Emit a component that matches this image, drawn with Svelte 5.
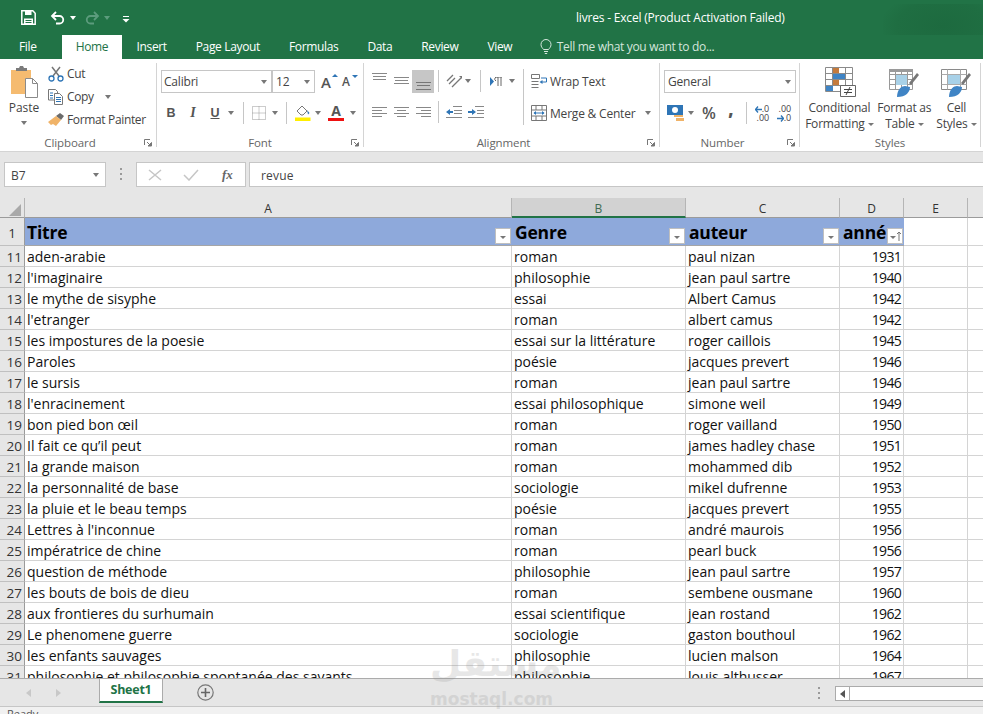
<script>
  const tabs = ['Insert', 'Page Layout', 'Formulas', 'Data', 'Review', 'View'];
  const rows = [
    [11, 'aden-arabie', 'roman', 'paul nizan', 1931],
    [12, "l'imaginaire", 'philosophie', 'jean paul sartre', 1940],
    [13, 'le mythe de sisyphe', 'essai', 'Albert Camus', 1942],
    [14, "l'etranger", 'roman', 'albert camus', 1942],
    [15, 'les impostures de la poesie', 'essai sur la littérature', 'roger caillois', 1945],
    [16, 'Paroles', 'poésie', 'jacques prevert', 1946],
    [17, 'le sursis', 'roman', 'jean paul sartre', 1946],
    [18, "l'enracinement", 'essai philosophique', 'simone weil', 1949],
    [19, 'bon pied bon œil', 'roman', 'roger vailland', 1950],
    [20, 'Il fait ce qu’il peut', 'roman', 'james hadley chase', 1951],
    [21, 'la grande maison', 'roman', 'mohammed dib', 1952],
    [22, 'la personnalité de base', 'sociologie', 'mikel dufrenne', 1953],
    [23, 'la pluie et le beau temps', 'poésie', 'jacques prevert', 1955],
    [24, "Lettres à l'inconnue", 'roman', 'andré maurois', 1956],
    [25, 'impératrice de chine', 'roman', 'pearl buck', 1956],
    [26, 'question de méthode', 'philosophie', 'jean paul sartre', 1957],
    [27, 'les bouts de bois de dieu', 'roman', 'sembene ousmane', 1960],
    [28, 'aux frontieres du surhumain', 'essai scientifique', 'jean rostand', 1962],
    [29, 'Le phenomene guerre', 'sociologie', 'gaston bouthoul', 1962],
    [30, 'les enfants sauvages', 'philosophie', 'lucien malson', 1964],
    [31, 'philosophie et philosophie spontanée des savants', 'philosophie', 'louis althusser', 1967]
  ];
  const heads = ['A', 'B', 'C', 'D', 'E', ''];
</script>

<div class="window">
  <header class="titlebar">
    <div class="qat">
      <svg class="save" width="15" height="15" viewBox="0 0 15 15"><path d="M.8.8h11l2.4 2.4v11H.8z" fill="none" stroke="#fff" stroke-width="1.5"/><path d="M4 1h6.500v4H4zM3 8.500h9V14H3z" fill="#fff"/><path d="M4.500 10h6v1h-6zM4.500 12h6v1h-6z" fill="#217346"/></svg>
      <svg class="undo" width="15" height="14" viewBox="0 0 15 14"><path d="M2 5h7.500a3.700 3.700 0 0 1 0 7.500H6M6 1 2 5l4 4" fill="none" stroke="#fff" stroke-width="1.800"/></svg>
      <i class="caret white"></i>
      <svg class="redo" width="15" height="14" viewBox="0 0 15 14"><path d="M13 5H5.500a3.700 3.700 0 0 0 0 7.500H9M9 1l4 4-4 4" fill="none" stroke="#5c9c7d" stroke-width="1.800"/></svg>
      <i class="caret dim"></i>
      <svg class="custom" width="8" height="7" viewBox="0 0 8 7"><path d="M1 .5h6" stroke="#fff"/><path d="M.5 3h7L4 6.500z" fill="#fff"/></svg>
    </div>
    <div class="doc-title">livres - Excel (Product Activation Failed)</div>
    <div class="blot"></div>
  </header>

  <nav class="tabs">
    <span class="tab file">File</span>
    <span class="tab active">Home</span>
    {#each tabs as t}<span class="tab">{t}</span>{/each}
    <svg class="bulb" width="12" height="16" viewBox="0 0 12 16"><path d="M3.500 10.500C2.500 9 1 8 1 5.500a5 5 0 0 1 10 0C11 8 9.500 9 8.500 10.500zM4 12.500h4M4.800 14.500h2.400" fill="none" stroke="#d5e6dd"/></svg>
    <span class="tell">Tell me what you want to do...</span>
  </nav>

  <section class="ribbon">
    <div class="group clipboard">
      <div class="body clip-body">
        <div class="paste">
          <svg width="29" height="32" viewBox="0 0 29 32"><path d="M1 4h20v24H1z" fill="#f5bb70"/><path d="M6 2h3l1-2h3l1 2h3v3H6z" fill="#7b7b7b"/><path d="M15.500 12.500h7l5 5v14h-12z" fill="#fff" stroke="#8a8a8a"/><path d="M22.500 12.500v5h5" fill="none" stroke="#8a8a8a"/></svg>
          <span>Paste</span>
          <i class="caret"></i>
        </div>
        <div class="clip-list">
          <div class="clip-item">
            <svg width="16" height="16" viewBox="0 0 16 16"><path d="M4 1l7 9M12 1 5 10" stroke="#777" stroke-width="1.500"/><circle cx="3.500" cy="12.500" r="2.500" fill="none" stroke="#2e75b6" stroke-width="1.300"/><circle cx="12.500" cy="12.500" r="2.500" fill="none" stroke="#2e75b6" stroke-width="1.300"/></svg>
            <span>Cut</span>
          </div>
          <div class="clip-item">
            <svg width="16" height="16" viewBox="0 0 16 16"><path d="M.5.500h7l2 2V11H.5z" fill="#fff" stroke="#777"/><path d="M6.500 4.500h5l3 3v8h-8z" fill="#fff" stroke="#777"/><path d="M2 4h3M2 6.500h3M2 9h3M8 8.500h5M8 10.500h5M8 12.500h5" stroke="#2e75b6"/></svg>
            <span>Copy</span>
            <i class="caret copy-caret"></i>
          </div>
          <div class="clip-item">
            <svg width="16" height="14" viewBox="0 0 16 14"><path d="M8 3l4-3 4 3-3 4z" fill="#6b6b6b"/><path d="M0 9l8-6 5 4-5 6-3-2-2 1z" fill="#f0b368"/></svg>
            <span>Format Painter</span>
          </div>
        </div>
      </div>
      <div class="label">Clipboard<svg class="launch" width="8" height="8" viewBox="0 0 8 8"><path d="M.5 6V.5H6" fill="none" stroke="#777"/><path d="M3 3l3.500 3.500M4 7h3.500V3.500z" stroke="#777" fill="#777"/></svg></div>
    </div>

    <div class="group font">
      <div class="body col">
        <div class="font-row1">
          <div class="field fname"><span>Calibri</span><i class="caret"></i></div>
          <div class="field fsize"><span>12</span><i class="caret"></i></div>
          <span class="grow-a big">A<i class="up"></i></span>
          <span class="grow-a small">A<i class="down"></i></span>
        </div>
        <div class="font-row2">
          <b class="bi">B</b>
          <em class="bi">I</em>
          <u class="bi">U</u>
          <i class="caret"></i>
          <s class="sep"></s>
          <svg width="14" height="14" viewBox="0 0 14 14"><path d="M.5.500h13v13H.5zM7 .5v13M.5 7h13" fill="none" stroke="#999" stroke-dasharray="1 1"/></svg>
          <i class="caret"></i>
          <s class="sep"></s>
          <svg width="17" height="17" viewBox="0 0 17 17"><path d="M3 7l5-5 5 5-4 4H7z" fill="#fff" stroke="#777"/><path d="M13 6l2.500 3-1.500 1.500z" fill="#2e75b6"/><path d="M1 13.500h15.500V17H1z" fill="#ffee00"/></svg>
          <i class="caret"></i>
          <span class="fcolor">A</span>
          <i class="caret"></i>
        </div>
      </div>
      <div class="label">Font<svg class="launch" width="8" height="8" viewBox="0 0 8 8"><path d="M.5 6V.5H6" fill="none" stroke="#777"/><path d="M3 3l3.500 3.500M4 7h3.500V3.500z" stroke="#777" fill="#777"/></svg></div>
    </div>

    <div class="group alignment">
      <div class="body align-body">
        <div class="align-tools">
          <div class="align-row1">
            <svg class="lift" width="15" height="10" viewBox="0 0 15 10"><path d="M0 .5h15M1 3.500h13M1 6.500h13" stroke="#888"/></svg>
            <svg width="15" height="10" viewBox="0 0 15 10"><path d="M0 1.500h15M1 4.500h13M0 7.500h15" stroke="#888"/></svg>
            <span class="selected"><svg width="15" height="10" viewBox="0 0 15 10"><path d="M0 2.500h15M1 5.500h13M0 9.500h15" stroke="#777"/></svg></span>
            <s class="sep"></s>
            <svg width="17" height="16" viewBox="0 0 17 16"><path d="M1 8l6-6M3 11l6-6M6 14 15 5" stroke="#777" stroke-width="1.300"/><path d="M13 3h3v3z" fill="#777"/></svg>
            <i class="caret"></i>
            <s class="sep"></s>
            <svg width="13" height="9" viewBox="0 0 13 9"><path d="M0 0l4 4.500L0 9z" fill="#2e75b6"/><path d="M8 0v9M11 0v9M6 0h6M6 4a2 2 0 0 1 2-4" stroke="#666" fill="none"/></svg>
            <i class="caret"></i>
          </div>
          <div class="align-row2">
            <svg width="15" height="10" viewBox="0 0 15 10"><path d="M0 .5h15M0 3.500h10M0 6.500h15M0 9.500h10" stroke="#888"/></svg>
            <svg width="15" height="10" viewBox="0 0 15 10"><path d="M0 .5h15M3 3.500h9M0 6.500h15M3 9.500h9" stroke="#888"/></svg>
            <svg width="15" height="10" viewBox="0 0 15 10"><path d="M0 .5h15M5 3.500h10M0 6.500h15M5 9.500h10" stroke="#888"/></svg>
            <s class="sep"></s>
            <svg width="16" height="12" viewBox="0 0 16 12"><path d="M7 .5h9M8 4.500h8M8 7.500h8M0 11.500h16" stroke="#888"/><path d="M0 6l4-3v2h3v2H4v2z" fill="#2e75b6"/></svg>
            <svg width="16" height="12" viewBox="0 0 16 12"><path d="M7 .5h9M9 4.500h7M9 7.500h7M0 11.500h16" stroke="#888"/><path d="M8 6 4 3v2H0v2h4v2z" fill="#2e75b6"/></svg>
          </div>
        </div>
        <s class="sep tall"></s>
        <div class="wrap-col">
          <div class="wrap-item">
            <svg width="16" height="16" viewBox="0 0 16 16"><path d="M.5 1.500h8v4h-8zM.5 8.500h7M.5 11.500h7M.5 14.500h7" fill="none" stroke="#777"/><path d="M10 5h5.500v4H10" fill="none" stroke="#2e75b6"/><path d="M8.500 9l3-2v4z" fill="#2e75b6"/></svg>
            <span>Wrap Text</span>
          </div>
          <div class="wrap-item">
            <svg width="16" height="16" viewBox="0 0 16 16"><path d="M.5.500h15v15H.5zM.5 5h15M.5 11h15M5 .5V5M11 .5V5M5 11v4.500M11 11v4.500" fill="none" stroke="#777"/><path d="M3 8h10" stroke="#2e75b6"/><path d="M5 6 2.500 8 5 10zM11 6l2.500 2L11 10z" fill="#2e75b6"/></svg>
            <span>Merge &amp; Center</span>
            <i class="caret merge-caret"></i>
          </div>
        </div>
      </div>
      <div class="label">Alignment<svg class="launch" width="8" height="8" viewBox="0 0 8 8"><path d="M.5 6V.5H6" fill="none" stroke="#777"/><path d="M3 3l3.500 3.500M4 7h3.500V3.500z" stroke="#777" fill="#777"/></svg></div>
    </div>

    <div class="group number">
      <div class="body col">
        <div class="field general"><span>General</span><i class="caret"></i></div>
        <div class="num-row">
          <svg width="17" height="16" viewBox="0 0 17 16"><path d="M0 0h16v10H0z" fill="#2e75b6"/><circle cx="8" cy="5" r="3" fill="#fff"/><path d="M7 10h9v2H7zM9 13h8v3H9z" fill="#f0b368"/></svg>
          <i class="caret"></i>
          <span class="pct">%</span>
          <span class="comma">,</span>
          <s class="sep"></s>
          <span class="dec"><svg width="7" height="7" viewBox="0 0 7 7"><path d="M3 .5.500 3.500 3 6.500M1 3.500h6" fill="none" stroke="#2e75b6" stroke-width="1.300"/></svg>.0<br/>.00</span>
          <span class="dec">.00<br/><svg width="7" height="7" viewBox="0 0 7 7"><path d="M4 .5l2.500 3L4 6.500M6 3.500H0" fill="none" stroke="#2e75b6" stroke-width="1.300"/></svg>.0</span>
        </div>
      </div>
      <div class="label">Number<svg class="launch" width="8" height="8" viewBox="0 0 8 8"><path d="M.5 6V.5H6" fill="none" stroke="#777"/><path d="M3 3l3.500 3.500M4 7h3.500V3.500z" stroke="#777" fill="#777"/></svg></div>
    </div>

    <div class="group styles">
      <div class="body styles-body">
        <div class="style-btn cond">
          <svg width="31" height="30" viewBox="0 0 31 30"><path d="M.5.500h27v24H.5zM7.500.5v24M20.500.5v24M.5 6.500h27M.5 12.500h27M.5 18.500h27" fill="#fff" stroke="#8a8a8a"/><path d="M8 1h6v5H8zM8 13h6v5H8z" fill="#c47a3c"/><path d="M8 7h12v5H8zM1 19h7v5H1z" fill="#3f84c5"/><path d="M15.500 18.500h15v11h-15z" fill="#fff" stroke="#666"/><path d="M19 22.500h8M19 25.500h8M25 20l-4 8" stroke="#444"/></svg>
          <span>Conditional</span>
          <span>Formatting<i class="caret"></i></span>
        </div>
        <div class="style-btn fmt">
          <svg width="30" height="30" viewBox="0 0 30 30"><path d="M.5 2.500h23v20H.5zM6.500 2.500v20M12.500 2.500v20M18.500 2.500v20M.5 7.500h23M.5 12.500h23M.5 17.500h23" fill="#fff" stroke="#999"/><path d="M7 8h11v10H7z" fill="#a8d1e8"/><path d="M0 2h24v3H0z" fill="#9a9a9a"/><path d="M20 16 28 6l2 2-8 10z" fill="#777"/><path d="M8 30c0-8 5-11 8-11l5 1c0 5-4 10-13 10z" fill="#3f84c5"/></svg>
          <span>Format as</span>
          <span>Table<i class="caret"></i></span>
        </div>
        <div class="style-btn cellst">
          <svg width="30" height="30" viewBox="0 0 30 30"><path d="M.5 2.500h25v20H.5z" fill="#fff" stroke="#8a8a8a"/><path d="M6.500 7.500h13v10h-13z" fill="#a8d1e8" stroke="#8a8a8a"/><path d="M6.500 2.500v20M19.500 2.500v20M.5 7.500h25M.5 17.500h25" stroke="#aaa"/><path d="M20 16 28 6l2 2-8 10z" fill="#777"/><path d="M8 30c0-8 5-11 8-11l5 1c0 5-4 10-13 10z" fill="#3f84c5"/></svg>
          <span>Cell</span>
          <span>Styles<i class="caret"></i></span>
        </div>
      </div>
      <div class="label">Styles</div>
    </div>
  </section>

  <section class="formula">
    <div class="box namebox"><span>B7</span><i class="caret"></i></div>
    <div class="grip"></div>
    <div class="box fxbox">
      <svg width="14" height="12" viewBox="0 0 14 12"><path d="M1 1l12 10M13 1 1 11" stroke="#c6c6c6" stroke-width="1.500"/></svg>
      <svg width="16" height="12" viewBox="0 0 16 12"><path d="M1 6l5 5L15 1" fill="none" stroke="#c6c6c6" stroke-width="1.500"/></svg>
      <span class="fx">fx</span>
    </div>
    <div class="box input">revue</div>
  </section>

  <section class="sheet">
    <div class="colheads">
      <div class="corner"><svg width="12" height="12" viewBox="0 0 12 12"><path d="M12 0v12H0z" fill="#a9a9a9"/></svg></div>
      {#each heads as h, i}
        <div class="colhead c{i}" class:sel={h === 'B'}>{h}</div>
      {/each}
    </div>
    <div class="row head">
      <div class="rowhead">1</div>
      <div class="cell c0 hc"><span>Titre</span><button class="filter" aria-label="filter"><i class="caret"></i></button></div>
      <div class="cell c1 hc"><span>Genre</span><button class="filter" aria-label="filter"><i class="caret"></i></button></div>
      <div class="cell c2 hc"><span>auteur</span><button class="filter" aria-label="filter"><i class="caret"></i></button></div>
      <div class="cell c3 hc"><span>anné</span><button class="filter" aria-label="sort"><i class="caret"></i><svg width="4" height="9" viewBox="0 0 4 9"><path d="M2 0v9M0 2l2-2 2 2" fill="none" stroke="#777"/></svg></button></div>
      <div class="cell c4"></div>
      <div class="cell c5"></div>
    </div>
    {#each rows as r}
      <div class="row">
        <div class="rowhead">{r[0]}</div>
        <div class="cell c0">{r[1]}</div>
        <div class="cell c1">{r[2]}</div>
        <div class="cell c2">{r[3]}</div>
        <div class="cell c3 num">{r[4]}</div>
        <div class="cell c4"></div>
        <div class="cell c5"></div>
      </div>
    {/each}
  </section>

  <footer class="sheetbar">
    <svg class="nav-a" width="6" height="8" viewBox="0 0 6 8"><path d="M5 0v8L0 4z" fill="#c8c8c8"/></svg>
    <svg class="nav-b" width="6" height="8" viewBox="0 0 6 8"><path d="M1 0v8l5-4z" fill="#c8c8c8"/></svg>
    <div class="sheettab">Sheet1</div>
    <svg class="plus" width="17" height="17" viewBox="0 0 17 17"><circle cx="8.500" cy="8.500" r="7.700" fill="none" stroke="#777" stroke-width="1.200"/><path d="M8.500 4v9M4 8.500h9" stroke="#666" stroke-width="1.600"/></svg>
    <div class="grip"></div>
    <div class="hscroll"><span class="hleft"><svg width="5" height="8" viewBox="0 0 5 8"><path d="M5 0v8L0 4z" fill="#555"/></svg></span></div>
  </footer>
  <div class="status">Ready</div>

  <div class="watermark" aria-hidden="true">
    <div class="wm-ar">مستقل</div>
    <div class="wm-en">mostaql.com</div>
  </div>
</div>

<style>
  :global(body) { margin: 0; background: #e6e6e6; }
  .window { position: relative; width: 983px; height: 714px; overflow: hidden; font-family: "Open Sans", "Noto Sans", sans-serif; font-size: 12px; color: #444; display: flex; flex-direction: column; }
  i { display: block; font-style: normal; }
  s { text-decoration: none; display: block; }

  .caret { width: 0; height: 0; border-left: 3.500px solid transparent; border-right: 3.500px solid transparent; border-top: 4px solid #777; flex: none; }
  .caret.white { border-top-color: #fff; margin-left: 5px; margin-top: 1px; }
  .caret.dim { border-top-color: #5c9c7d; margin-left: 4px; margin-top: 1px; }
  .sep { width: 1px; height: 22px; background: #c6c6c6; flex: none; }

  .titlebar { height: 35px; background: #217346; display: flex; align-items: center; position: relative; flex: none; }
  .qat { display: flex; align-items: center; padding-left: 21px; width: 555px; box-sizing: border-box; }
  .save { margin-right: 14px; }
  .redo { margin-left: 9px; }
  .custom { margin-left: 12px; margin-top: 3px; }
  .doc-title { color: #fff; font-size: 12px; white-space: nowrap; padding-left: 21px; letter-spacing: -.19px; }
  .blot { position: absolute; right: 0; top: 4px; width: 100px; height: 55px; background: radial-gradient(ellipse at 60% 40%, #1d6a3f 0, #1f6e42 55%, #217346 75%); }

  .tabs { height: 24px; background: #217346; display: flex; align-items: stretch; color: #fff; position: relative; flex: none; }
  .tab { padding: 0 14.500px; line-height: 24px; white-space: nowrap; letter-spacing: -.35px; }
  .tab.file { width: 62px; padding: 0 0 0 19px; box-sizing: border-box; }
  .tab.active { background: #fff; color: #217346; width: 60px; padding: 0; text-align: center; margin-right: 0; }
  .bulb { align-self: center; margin-left: 13px; }
  .tell { color: #d5e6dd; line-height: 24px; margin-left: 5px; letter-spacing: -.32px; white-space: nowrap; }

  .ribbon { height: 92px; background: #fff; border-bottom: 1px solid #d4d4d4; display: flex; flex: none; box-sizing: content-box; }
  .group { display: flex; flex-direction: column; margin-top: 4px; height: 84px; border-right: 1px solid #d4d4d4; position: relative; }
  .body { flex: 1; min-height: 0; }
  .col { display: flex; flex-direction: column; }
  .label { height: 14px; text-align: center; font-size: 11.500px; line-height: 14px; color: #666; letter-spacing: -.1px; margin-bottom: -3px; position: relative; flex: none; box-sizing: border-box; }
  .launch { position: absolute; right: 4px; top: 3px; }
  .clipboard { width: 156px; }
  .clipboard .label { padding-right: 16px; }
  .font { width: 206px; }
  .alignment { width: 295px; }
  .alignment .label { padding-right: 16px; }
  .number { width: 139px; }
  .number .label { padding-right: 14px; }
  .styles { width: 180px; }

  .clip-body { display: flex; }
  .paste { width: 48px; display: flex; flex-direction: column; align-items: center; padding-top: 3px; box-sizing: border-box; color: #444; }
  .paste span { line-height: 16px; margin-top: 2px; }
  .paste .caret { margin-top: 5px; }
  .clip-list { margin-top: -1px; }
  .clip-item { display: flex; align-items: center; height: 23px; gap: 3px; white-space: nowrap; letter-spacing: -.35px; }
  .clip-item svg { width: 16px; flex: none; }
  .copy-caret { margin-left: 8px; }

  .font-row1 { display: flex; align-items: center; padding: 7px 0 0 4px; }
  .field { display: flex; align-items: center; justify-content: space-between; height: 23px; box-sizing: border-box; border: 1px solid #c6c6c6; background: #fff; padding: 0 4px 0 2px; white-space: nowrap; letter-spacing: -.2px; }
  .fname { width: 111px; }
  .fsize { width: 43px; padding-left: 3px; margin-right: 6px; }
  .grow-a { color: #555; font-weight: 600; position: relative; width: 20px; }
  .big { font-size: 15px; }
  .small { font-size: 12px; padding-left: 1px; }
  .up, .down { position: absolute; width: 0; height: 0; border-left: 3px solid transparent; border-right: 3px solid transparent; top: 2px; left: 11px; }
  .up { border-bottom: 3px solid #2e75b6; }
  .down { border-top: 3px solid #2e75b6; }

  .font-row2 { display: grid; grid-template-columns: 22px 22px 22px 10px 14px 18px 14px 8px 24px 8px 28px 6px; justify-items: center; align-items: center; padding: 8px 0 0 3px; height: 23px; }
  .bi { font-size: 12.500px; color: #555; }
  .font-row2 em { font-family: "Liberation Serif", serif; font-weight: bold; font-size: 14px; }
  .font-row2 b { font-family: "Liberation Sans", sans-serif; font-size: 12.500px; }
  .font-row2 u { font-family: "Liberation Sans", sans-serif; font-weight: bold; }
  .fcolor { font-weight: 700; font-size: 14px; color: #555; border-bottom: 3px solid #ee1111; line-height: 14px; padding: 0 3px; }

  .align-body { display: flex; }
  .align-tools { width: 159px; padding: 6px 0 0 4px; box-sizing: border-box; }
  .align-row1 { display: grid; grid-template-columns: 22px 22px 22px 8px 24px 4px 20px 12px 20px; justify-items: center; align-items: center; justify-content: start; height: 24px; }
  .lift { margin-bottom: 6px; }
  .selected { width: 22px; height: 23px; background: #c6c6c6; display: flex; align-items: flex-end; justify-content: center; padding-bottom: 3px; box-sizing: border-box; }
  .align-row2 { display: grid; grid-template-columns: 22px 22px 22px 8px 24px 20px; justify-items: center; align-items: center; justify-content: start; height: 22px; margin-top: 8px; }
  .sep.tall { height: 56px; margin-top: 6px; }
  .wrap-col { padding: 6px 0 0 7px; }
  .wrap-item { display: flex; align-items: center; height: 24px; gap: 3px; white-space: nowrap; margin-bottom: 8px; letter-spacing: -.2px; }
  .merge-caret { margin-left: 7px; }

  .general { width: 132px; margin: 7px 0 0 4px; padding: 0 4px 0 3px; }
  .num-row { display: grid; grid-template-columns: 22px 10px 26px 18px 12px 20px 24px; justify-items: center; align-items: center; padding: 9px 0 0 4px; height: 22px; }
  .pct { font-size: 16px; font-weight: 600; color: #555; }
  .comma { font-size: 17px; font-weight: 800; color: #555; line-height: 10px; margin-bottom: 6px; }
  .dec { font-size: 9px; line-height: 9px; color: #444; text-align: right; white-space: nowrap; }
  .dec svg { vertical-align: -1px; }

  .styles-body { display: flex; padding: 4px 0 0 5px; }
  .style-btn { display: flex; flex-direction: column; align-items: center; text-align: center; letter-spacing: -.2px; white-space: nowrap; }
  .style-btn span { line-height: 16px; display: flex; align-items: center; gap: 3px; }
  .style-btn span:nth-of-type(1) { margin-top: 3px; }
  .style-btn .caret { border-left-width: 3px; border-right-width: 3px; border-top-width: 3px; }
  .cond { width: 70px; }
  .cond svg { margin-left: 2px; }
  .fmt { width: 58px; margin-left: 2px; }
  .cellst { width: 48px; }

  .formula { height: 46px; background: #e6e6e6; display: flex; align-items: flex-start; padding: 10px 0 0 4px; box-sizing: border-box; flex: none; }
  .box { height: 25px; box-sizing: border-box; border: 1px solid #c6c6c6; background: #fff; display: flex; align-items: center; padding-top: 1px; }
  .namebox { width: 102px; justify-content: space-between; padding: 1px 6px 0 6px; }
  .grip { width: 2px; height: 12px; margin: 6px 14px 0 14px; background: repeating-linear-gradient(#9a9a9a 0 2px, transparent 2px 5px); flex: none; }
  .fxbox { width: 110px; margin-right: 3px; padding-left: 11px; gap: 21px; }
  .fx { font-family: "Liberation Serif", serif; font-style: italic; font-weight: bold; font-size: 13px; color: #666; margin-left: 2px; }
  .input { flex: 1; padding-left: 11px; border-right: 0; letter-spacing: .2px; }

  .sheet { flex: 1; min-height: 0; overflow: hidden; background: #fff; }
  .colheads { height: 20px; display: flex; background: #e6e6e6; font-size: 12px; color: #333; }
  .corner { width: 25px; box-sizing: border-box; border-right: 1px solid #b5b5b5; border-bottom: 1px solid #9b9b9b; padding: 5px 0 0 9px; flex: none; }
  .colhead { height: 20px; box-sizing: border-box; text-align: center; line-height: 21px; border-right: 1px solid #b5b5b5; border-bottom: 1px solid #9b9b9b; flex: none; }
  .colhead.sel { background: #d2d2d2; border-bottom: 2px solid #217346; color: #3f6b53; }
  .c0 { width: 487px; }
  .c1 { width: 174px; }
  .c2 { width: 154px; }
  .c3 { width: 64px; }
  .c4 { width: 64px; }
  .c5 { width: 16px; }

  .row { display: flex; height: 21px; }
  .row.head { height: 28px; }
  .rowhead { width: 25px; flex: none; box-sizing: border-box; background: #e6e6e6; border-right: 1px solid #9b9b9b; border-bottom: 1px solid #c0c0c0; text-align: right; padding-right: 2px; font-size: 13.500px; line-height: 22px; color: #333; }
  .head .rowhead { line-height: 30px; text-align: center; padding: 0; }
  .cell { flex: none; box-sizing: border-box; border-right: 1px solid #d4d4d4; border-bottom: 1px solid #d4d4d4; padding-left: 2px; font-size: 14px; line-height: 22px; color: #111; white-space: nowrap; overflow: hidden; }
  .num { text-align: right; padding-right: 2px; letter-spacing: -.7px; }
  .hc { background: #8ea9db; font-weight: 700; font-size: 17.500px; color: #000; line-height: 28px; position: relative; border-right: 0; border-bottom: 1px solid #a6a6a6; letter-spacing: -.2px; padding-left: 3px; }
  .hc.c0 { padding-left: 2px; }
  .filter { position: absolute; right: 1px; top: 10px; width: 16px; height: 16px; padding: 0; background: #fff; border: 1px solid #bfbfbf; display: flex; align-items: center; justify-content: center; gap: 1px; }
  .filter .caret { margin-top: 2px; border-left-width: 3px; border-right-width: 3px; border-top-width: 3px; }

  .sheetbar { height: 28px; flex: none; background: #e6e6e6; border-top: 1px solid #ababab; box-sizing: border-box; display: flex; align-items: flex-start; }
  .nav-a { margin: 10px 0 0 26px; }
  .nav-b { margin: 10px 0 0 23px; }
  .sheettab { margin-left: 38px; width: 64px; height: 24px; box-sizing: border-box; background: #fff; border: 1px solid #ababab; border-top: 0; border-bottom: 2px solid #217346; color: #217346; font-weight: 700; font-size: 12.500px; text-align: center; line-height: 22px; letter-spacing: -.25px; }
  .plus { margin: 5px 0 0 34px; }
  .sheetbar .grip { margin: 8px 15px 0 604px; }
  .hscroll { flex: 1; height: 15px; margin-top: 7px; box-sizing: border-box; border: 1px solid #ababab; border-right: 0; background: #fff; display: flex; }
  .hleft { width: 13px; border-right: 1px solid #ababab; display: flex; align-items: center; justify-content: center; }
  .status { height: 8px; flex: none; background: #f1f1f1; border-top: 1px solid #c6c6c6; box-sizing: border-box; padding-left: 7px; font-size: 11px; line-height: 14px; overflow: hidden; color: #555; }

  .watermark { position: absolute; left: 430px; top: 642px; width: 120px; color: #8a8a8a; opacity: .2; text-align: center; pointer-events: none; font-family: "DejaVu Sans", sans-serif; }
  .wm-ar { font-size: 36px; line-height: 44px; font-weight: 700; }
  .wm-en { font-size: 17px; line-height: 20px; font-weight: 700; margin-top: 3px; }
</style>
